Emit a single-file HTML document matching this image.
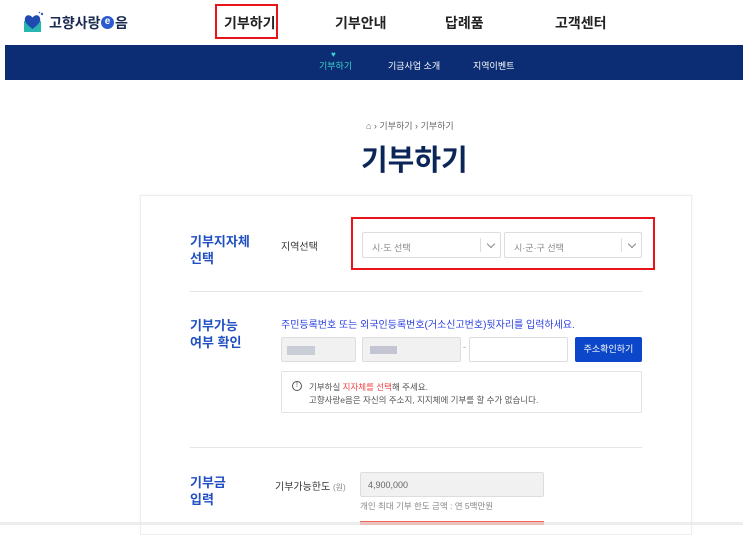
<!DOCTYPE html>
<html><head><meta charset="utf-8"><style>
*{margin:0;padding:0;box-sizing:border-box}
body{width:743px;height:525px;overflow:hidden;background:#fff;font-family:"Liberation Sans","Noto Sans CJK KR",sans-serif;position:relative;color:#333}
.a{position:absolute;white-space:nowrap}
.nav{font-size:14px;font-weight:bold;color:#222;top:13px}
.sub{font-size:9px;color:#fff;top:59px}
.lbl{font-size:13px;font-weight:bold;color:#1f4fc1;line-height:17px;left:190px}
.box{position:absolute;border:1px solid #ddd;border-radius:2px;background:#fff}
.sel{font-size:9px;color:#888;padding:8px 9px}
.sel:after{content:"";position:absolute;right:6px;top:8px;width:5px;height:5px;border-right:1px solid #888;border-bottom:1px solid #888;transform:rotate(45deg)}
.sel:before{content:"";position:absolute;right:19px;top:5px;height:14px;border-left:1px solid #ddd}
.gray{background:#f1f1f1}
</style></head><body>
<svg class="a" style="left:23px;top:11px" width="22" height="22" viewBox="0 0 22 22"><rect x="1" y="10" width="17" height="11" fill="#29b5b0"/><path d="M9.5 18 C3 13 1 10 2 7 C3 3.5 7 3.5 9.5 6.5 C12 3.5 16 3.5 17 7 C18 10 16 13 9.5 18Z" fill="#1f4bb0"/><circle cx="19" cy="3" r="1.2" fill="#2b5bd0"/><circle cx="16.5" cy="1.5" r="0.8" fill="#2b5bd0"/></svg>
<div class="a" style="left:49px;top:13px;font-size:14px;font-weight:bold;color:#1a2a50">고향사랑</div>
<div class="a" style="left:101px;top:16px;width:13px;height:13px;border-radius:50%;background:#2b5bd0;color:#fff;font-size:10px;font-weight:bold;text-align:center;line-height:12px">e</div>
<div class="a" style="left:115px;top:13px;font-size:14px;font-weight:bold;color:#1a2a50">음</div>
<div class="a" style="left:215px;top:4px;width:63px;height:35px;border:2px solid #e8141a"></div>
<div class="a nav" style="left:224px">기부하기</div>
<div class="a nav" style="left:335px">기부안내</div>
<div class="a nav" style="left:445px">답례품</div>
<div class="a nav" style="left:555px">고객센터</div>
<div class="a" style="left:5px;top:45px;width:738px;height:35px;background:#0c2d73"></div>
<div class="a" style="left:331px;top:50px;color:#3ad3d0;font-size:8px">♥</div>
<div class="a sub" style="left:319px;color:#3ad3d0">기부하기</div>
<div class="a sub" style="left:388px">기금사업 소개</div>
<div class="a sub" style="left:473px">지역이벤트</div>
<div class="a" style="left:366px;top:119px;font-size:9px;color:#666">⌂ › 기부하기 › 기부하기</div>
<div class="a" style="left:361px;top:137px;font-size:29px;font-weight:bold;color:#0b2557">기부하기</div>
<div class="a" style="left:140px;top:195px;width:552px;height:340px;border:1px solid #eee;box-shadow:0 0 3px rgba(0,0,0,.06)"></div>
<div class="a lbl" style="top:233px">기부지자체<br>선택</div>
<div class="a" style="left:281px;top:238px;font-size:10px;color:#333">지역선택</div>
<div class="a" style="left:351px;top:217px;width:304px;height:53px;border:2px solid #e8141a"></div>
<div class="box sel" style="left:362px;top:232px;width:139px;height:26px">시·도 선택</div>
<div class="box sel" style="left:504px;top:232px;width:138px;height:26px">시·군·구 선택</div>
<div class="a" style="left:190px;top:291px;width:452px;height:1px;background:#e5e5e5"></div>
<div class="a lbl" style="top:317px">기부가능<br>여부 확인</div>
<div class="a" style="left:281px;top:316px;font-size:10px;color:#2a3fe0">주민등록번호 또는 외국인등록번호(거소신고번호)뒷자리를 입력하세요.</div>
<div class="box gray" style="left:281px;top:337px;width:75px;height:25px"><div style="margin:8px 5px;width:28px;height:9px;background:#c9cdd6"></div></div>
<div class="box gray" style="left:362px;top:337px;width:99px;height:25px"><div style="margin:8px 7px;width:27px;height:8px;background:#c3c5d3"></div></div>
<div class="a" style="left:463px;top:342px;font-size:9px;color:#999">-</div>
<div class="box" style="left:469px;top:337px;width:99px;height:25px"></div>
<div class="a" style="left:575px;top:337px;width:67px;height:25px;background:#0b47c8;border-radius:2px;color:#fff;font-size:9px;text-align:center;line-height:25px">주소확인하기</div>
<div class="box" style="left:281px;top:371px;width:361px;height:42px;border-color:#e3e3e3"></div>
<div class="a" style="left:292px;top:381px;width:10px;height:10px;border:1px solid #555;border-radius:50%;font-size:7px;text-align:center;line-height:8px;color:#555">!</div>
<div class="a" style="left:309px;top:381px;font-size:8.5px;color:#555">기부하실 <span style="color:#f04848">지자체를 선택</span>해 주세요.</div>
<div class="a" style="left:309px;top:394px;font-size:8.5px;color:#555">고향사랑e음은 자신의 주소지, 지지체에 기부를 할 수가 없습니다.</div>
<div class="a" style="left:190px;top:447px;width:452px;height:1px;background:#e5e5e5"></div>
<div class="a lbl" style="top:474px">기부금<br>입력</div>
<div class="a" style="left:275px;top:478px;font-size:10px;color:#333">기부가능한도 <span style="font-size:8px;color:#888">(원)</span></div>
<div class="box gray" style="left:360px;top:472px;width:184px;height:25px;font-size:9px;color:#666;padding:7px 7px">4,900,000</div>
<div class="a" style="left:360px;top:500px;font-size:8.5px;color:#888">개인 최대 기부 한도 금액 : 연 5백만원</div>
<div class="a" style="left:360px;top:521px;width:184px;height:4px;background:#f26a5a"></div>
<div class="a" style="left:0;top:522px;width:743px;height:3px;background:#e6e6e6;opacity:.7"></div>
</body></html>
